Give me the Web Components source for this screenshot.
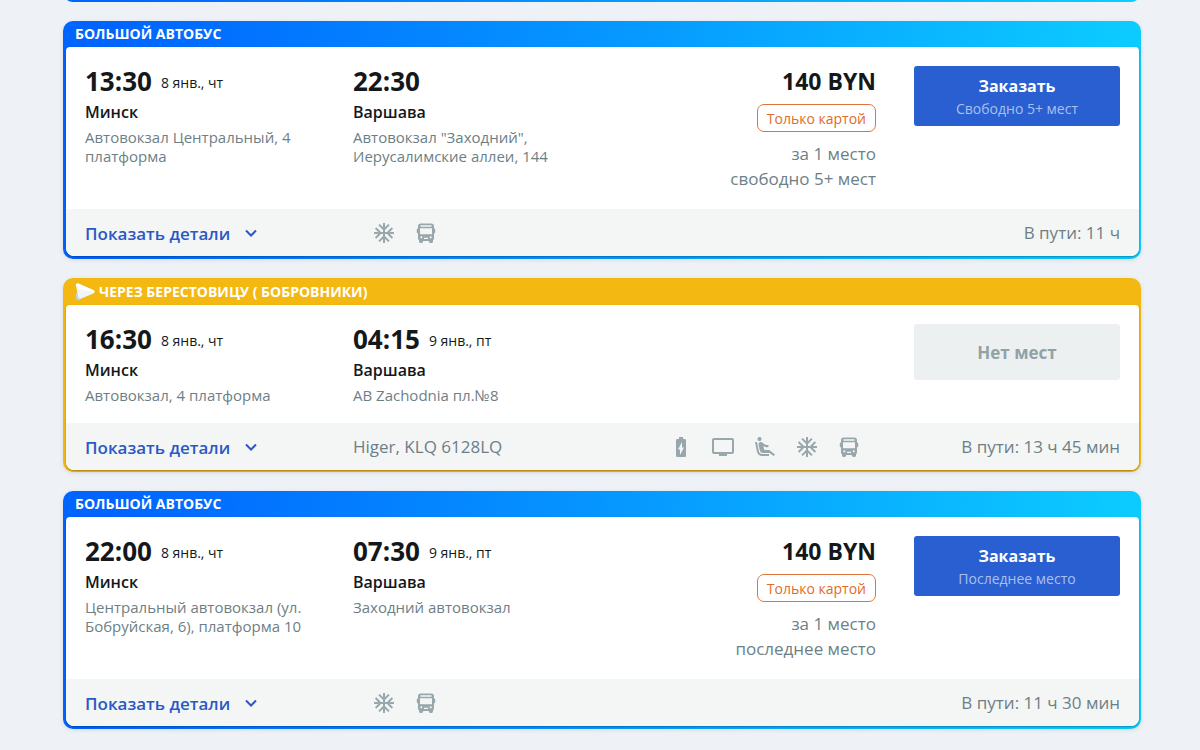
<!DOCTYPE html>
<html lang="ru">
<head>
<meta charset="utf-8">
<meta name="viewport" content="width=device-width, initial-scale=1">
<title>Минск — Варшава</title>
<style>
  body {
    margin: 0;
    background: #eef1f5;
    color: #14181a;
    font-family: "Open Sans", "Noto Sans", sans-serif;
  }
</style>
</head>
<body>
<trip-list>
  <trip-tail></trip-tail>

  <trip-card label="БОЛЬШОЙ АВТОБУС" duration="11 ч">
    <trip-stop slot="from" time="13:30" date="8 янв., чт" city="Минск">Автовокзал Центральный, 4 платформа</trip-stop>
    <trip-stop slot="to" time="22:30" city="Варшава">Автовокзал "Заходний", Иерусалимские аллеи, 144</trip-stop>
    <trip-price slot="price" amount="140 BYN" note="Только картой">свободно 5+ мест</trip-price>
    <order-button slot="order" hint="Свободно 5+ мест">Заказать</order-button>
    <amenity-icon slot="amenities" name="snow"></amenity-icon>
    <amenity-icon slot="amenities" name="bus"></amenity-icon>
  </trip-card>

  <trip-card class="amber" label="ЧЕРЕЗ БЕРЕСТОВИЦУ ( БОБРОВНИКИ)" horn duration="13 ч 45 мин" model="Higer, KLQ 6128LQ">
    <trip-stop slot="from" time="16:30" date="8 янв., чт" city="Минск">Автовокзал, 4 платформа</trip-stop>
    <trip-stop slot="to" time="04:15" date="9 янв., пт" city="Варшава">АВ Zachodnia пл.№8</trip-stop>
    <order-button slot="order" disabled>Нет мест</order-button>
    <amenity-icon slot="amenities" name="battery"></amenity-icon>
    <amenity-icon slot="amenities" name="tv"></amenity-icon>
    <amenity-icon slot="amenities" name="seat"></amenity-icon>
    <amenity-icon slot="amenities" name="snow"></amenity-icon>
    <amenity-icon slot="amenities" name="bus"></amenity-icon>
  </trip-card>

  <trip-card label="БОЛЬШОЙ АВТОБУС" duration="11 ч 30 мин">
    <trip-stop slot="from" time="22:00" date="8 янв., чт" city="Минск">Центральный автовокзал (ул. Бобруйская, 6), платформа 10</trip-stop>
    <trip-stop slot="to" time="07:30" date="9 янв., пт" city="Варшава">Заходний автовокзал</trip-stop>
    <trip-price slot="price" amount="140 BYN" note="Только картой">последнее место</trip-price>
    <order-button slot="order" hint="Последнее место">Заказать</order-button>
    <amenity-icon slot="amenities" name="snow"></amenity-icon>
    <amenity-icon slot="amenities" name="bus"></amenity-icon>
  </trip-card>
</trip-list>

<script>
const BLUE = 'linear-gradient(95deg, #0064ff 4%, #0ccbff 97%)';

class TripList extends HTMLElement {
  connectedCallback() {
    this.attachShadow({ mode: 'open' });
    this.shadowRoot.innerHTML = `
      <style>
        :host {
          display: flex;
          flex-direction: column;
          gap: 19px;
          max-width: 1078px;
          margin: 0 59px 0 63px;
          padding-bottom: 21px;
        }
      </style>
      <slot></slot>
    `;
  }
}
customElements.define('trip-list', TripList);

// Bottom edge of the card that is scrolled out of view
class TripTail extends HTMLElement {
  connectedCallback() {
    this.attachShadow({ mode: 'open' });
    this.shadowRoot.innerHTML = `
      <style>
        :host {
          display: flex;
          align-items: flex-end;
          height: 2px;
          overflow: hidden;
        }
        div {
          flex: 1 0 auto;
          height: 24px;
          border-radius: 10px;
          background: ${BLUE};
        }
      </style>
      <div></div>
    `;
  }
}
customElements.define('trip-tail', TripTail);

class TripStop extends HTMLElement {
  connectedCallback() {
    const date = this.getAttribute('date');
    this.attachShadow({ mode: 'open' });
    this.shadowRoot.innerHTML = `
      <style>
        :host {
          display: block;
          max-width: 230px;
        }
        .when {
          display: flex;
          align-items: center;
          gap: 9px;
          height: 31px;
          white-space: nowrap;
        }
        .time {
          font-size: 26px;
          font-weight: 700;
          line-height: 31px;
        }
        .date {
          padding-top: 3px;
          font-size: 14px;
          line-height: 20px;
        }
        .city {
          margin-top: 3px;
          font-size: 16px;
          font-weight: 600;
          line-height: 24px;
        }
        .address {
          margin-top: 4px;
          color: #6d7f86;
          font-size: 15px;
          line-height: 19px;
        }
      </style>
      <div class="when">
        <time class="time">${this.getAttribute('time')}</time>
        ${date ? `<span class="date">${date}</span>` : ''}
      </div>
      <div class="city">${this.getAttribute('city')}</div>
      <div class="address"><slot></slot></div>
    `;
  }
}
customElements.define('trip-stop', TripStop);

class TripPrice extends HTMLElement {
  connectedCallback() {
    this.attachShadow({ mode: 'open' });
    this.shadowRoot.innerHTML = `
      <style>
        :host {
          display: flex;
          flex-direction: column;
          align-items: flex-end;
          color: #6d7f86;
          font-size: 17px;
          line-height: 25px;
          white-space: nowrap;
        }
        .amount {
          color: #14181a;
          font-size: 23px;
          font-weight: 700;
          line-height: 31px;
        }
        .note {
          box-sizing: border-box;
          height: 28px;
          margin: 7px 0 9px;
          padding: 0 9px;
          border: 1px solid #de763a;
          border-radius: 7px;
          color: #df6c28;
          font-size: 14px;
          line-height: 28px;
        }
      </style>
      <div class="amount">${this.getAttribute('amount')}</div>
      <div class="note">${this.getAttribute('note')}</div>
      <div>за 1 место</div>
      <div><slot></slot></div>
    `;
  }
}
customElements.define('trip-price', TripPrice);

class OrderButton extends HTMLElement {
  connectedCallback() {
    const hint = this.getAttribute('hint');
    this.attachShadow({ mode: 'open' });
    this.shadowRoot.innerHTML = `
      <style>
        :host {
          display: block;
        }
        button {
          display: block;
          width: 100%;
          min-height: 56px;
          padding: 8px 8px 6px;
          border: 0;
          border-radius: 3px;
          background: #295fd0;
          color: #fff;
          font: 700 16px/24px "Open Sans", "Noto Sans", sans-serif;
          cursor: pointer;
        }
        button:hover {
          background: #2354bd;
        }
        button:disabled {
          background: #ecf0f1;
          color: #93a2a7;
          font-size: 17px;
          cursor: default;
        }
        small {
          display: block;
          color: #a9c0ee;
          font-size: 14px;
          font-weight: 400;
          line-height: 22px;
        }
      </style>
      <button type="button" ${this.hasAttribute('disabled') ? 'disabled' : ''}>
        <slot></slot>
        ${hint ? `<small>${hint}</small>` : ''}
      </button>
    `;
  }
}
customElements.define('order-button', OrderButton);

const ICONS = {
  snow: '<path d="M22 11h-4.17l3.24-3.24-1.41-1.42L15 11h-2V9l4.66-4.66-1.42-1.41L13 6.17V2h-2v4.17L7.76 2.93 6.34 4.34 11 9v2H9L4.34 6.34 2.93 7.76 6.17 11H2v2h4.17l-3.24 3.24 1.41 1.42L9 13h2v2l-4.66 4.66 1.42 1.41L11 17.83V22h2v-4.17l3.24 3.24 1.42-1.41L13 15v-2h2l4.66 4.66 1.41-1.42L17.83 13H22z"/>',
  bus: '<path fill-rule="evenodd" d="M6.5 2.500h11C19 2.500 20 3.500 20 5v2.500h.3c.5 0 .9.4.9.9v2.900c0 .5-.4.9-.9.9H20v5.300c0 .8-.4 1.400-1 1.800v1.200c0 .8-.6 1.400-1.400 1.400h-1.300c-.8 0-1.400-.6-1.400-1.400V20H9.100v.5c0 .8-.6 1.400-1.400 1.400H6.400c-.8 0-1.400-.6-1.400-1.400v-1.200c-.6-.4-1-1-1-1.800v-5.300h-.3c-.5 0-.9-.4-.9-.9V8.400c0-.5.4-.9.9-.9H4V5C4 3.500 5 2.500 6.500 2.500zM6.500 4.300v1.400h11V4.300zM6 7.300v6h12v-6zM7.300 15.200a1.100 1.100 0 1 0 0 2.200 1.100 1.100 0 0 0 0-2.200zM16.700 15.200a1.100 1.100 0 1 0 0 2.200 1.100 1.100 0 0 0 0-2.200zM10 16.800v1.200h4v-1.200z"/>',
  battery: '<path d="M15.670 4H14V2h-4v2H8.330C7.600 4 7 4.600 7 5.330v15.330C7 21.400 7.600 22 8.330 22h7.330c.74 0 1.340-.6 1.340-1.330V5.330C17 4.600 16.400 4 15.670 4zM11 20v-5.500H9L13 7v5.500h2L11 20z"/>',
  tv: '<path d="M21 3H3c-1.100 0-2 .9-2 2v12c0 1.100.9 2 2 2h5v2h8v-2h5c1.100 0 1.990-.9 1.990-2L23 5c0-1.100-.9-2-2-2zm0 14H3V5h18v12z"/>',
  seat: '<path d="M5.350 5.640c-.9-.64-1.120-1.880-.49-2.790.63-.9 1.880-1.120 2.790-.49.9.64 1.120 1.880.49 2.790-.64.9-1.880 1.120-2.790.49zM16 19H8.930c-1.480 0-2.740-1.080-2.960-2.540L4 7H2l1.990 9.760C4.370 19.200 6.470 21 8.940 21H16v-2zm.23-4h-4.880l-1.030-4.100c1.580.89 3.280 1.540 5.150 1.220V9.990c-1.630.31-3.440-.27-4.690-1.250L9.140 7.470c-.23-.18-.49-.3-.76-.38-.32-.09-.66-.12-.99-.06h-.02c-1.230.22-2.050 1.390-1.840 2.610l1.350 5.920C7.160 16.980 8.390 18 9.830 18h6.850l3.820 3 1.500-1.500-5.770-4.500z"/>'
};

class AmenityIcon extends HTMLElement {
  connectedCallback() {
    this.attachShadow({ mode: 'open' });
    this.shadowRoot.innerHTML = `
      <style>
        :host {
          display: block;
          padding: 0 9px;
        }
        svg {
          display: block;
          width: 24px;
          height: 24px;
          fill: #98a7ac;
        }
      </style>
      <svg viewBox="0 0 24 24" aria-hidden="true">${ICONS[this.getAttribute('name')]}</svg>
    `;
  }
}
customElements.define('amenity-icon', AmenityIcon);

class TripCard extends HTMLElement {
  connectedCallback() {
    const model = this.getAttribute('model');
    const horn = `
      <svg class="horn" viewBox="0 0 20 18" aria-hidden="true">
        <path d="M2 9l5 4-1.500 3.200c-.7 1-2.600 1.300-3.700.3-1.200-1.100-1.300-4 .2-7.500z" fill="#bcd8f0"/>
        <path d="M.8 2.200C1 .8 2.400.2 3.800.7l14.400 6.200c1.700.8 1.800 2.900.1 3.600L6.200 15.600c-1.300.5-2.500-.2-2.800-1.500z" fill="#f1f5f9"/>
        <path d="M.8 2.200C1 .8 2.400.2 3.800.7l14.400 6.200c1 .5 1.400 1.300 1.200 2.100L4 6z" fill="#fff"/>
      </svg>`;
    this.attachShadow({ mode: 'open' });
    this.shadowRoot.innerHTML = `
      <style>
        :host {
          display: block;
          padding: 0 2px 3px 3px;
          border-radius: 10px;
          background: ${BLUE};
          box-shadow: 0 1px 4px rgba(40, 70, 100, 0.12);
        }
        :host(.amber) {
          background: #f4b812;
          padding-bottom: 2px;
        }
        header {
          display: flex;
          align-items: center;
          gap: 4px;
          height: 26px;
          padding: 0 9px;
          color: #fff;
          font-size: 14px;
          font-weight: 700;
          line-height: 26px;
        }
        :host(.amber) header {
          height: 27px;
        }
        .horn {
          width: 20px;
          height: 18px;
        }
        .sheet {
          overflow: hidden;
          border-radius: 4px 4px 8px 8px;
          background: #fff;
          box-shadow: 0 1px 2px rgba(0, 0, 0, 0.3);
        }
        .trip {
          display: grid;
          grid-template-columns: 230px 1fr 190px 206px;
          gap: 38px;
          padding: 19px 19px 18px;
        }
        .order {
          grid-column: 4;
        }
        footer {
          display: grid;
          grid-template-columns: 230px 1fr 212px;
          gap: 38px;
          align-items: center;
          height: 47px;
          padding: 0 19px;
          background: #f4f6f6;
          color: #6d7f86;
          font-size: 17px;
        }
        button {
          display: flex;
          align-items: center;
          gap: 14px;
          padding: 2px 0 0;
          border: 0;
          background: none;
          color: #2a59c5;
          font: 600 17px/24px "Open Sans", "Noto Sans", sans-serif;
          white-space: nowrap;
          cursor: pointer;
        }
        button svg {
          width: 14px;
          height: 10px;
          fill: none;
          stroke: currentColor;
          stroke-width: 2;
        }
        .bus {
          display: flex;
          align-items: center;
          justify-content: space-between;
        }
        .amenities {
          display: flex;
          margin-left: 10px;
        }
        .duration {
          text-align: right;
          white-space: nowrap;
        }
      </style>
      <header>${this.hasAttribute('horn') ? horn : ''}<span>${this.getAttribute('label')}</span></header>
      <div class="sheet">
        <div class="trip">
          <slot name="from"></slot>
          <slot name="to"></slot>
          <slot name="price"></slot>
          <div class="order"><slot name="order"></slot></div>
        </div>
        <footer>
          <button type="button">
            <span>Показать детали</span>
            <svg viewBox="0 0 14 10" aria-hidden="true"><path d="M2 1.500l5 5 5-5"/></svg>
          </button>
          <div class="bus">
            ${model ? `<span>${model}</span>` : ''}
            <div class="amenities"><slot name="amenities"></slot></div>
          </div>
          <span class="duration">В пути: ${this.getAttribute('duration')}</span>
        </footer>
      </div>
    `;
  }
}
customElements.define('trip-card', TripCard);
</script>
</body>
</html>
